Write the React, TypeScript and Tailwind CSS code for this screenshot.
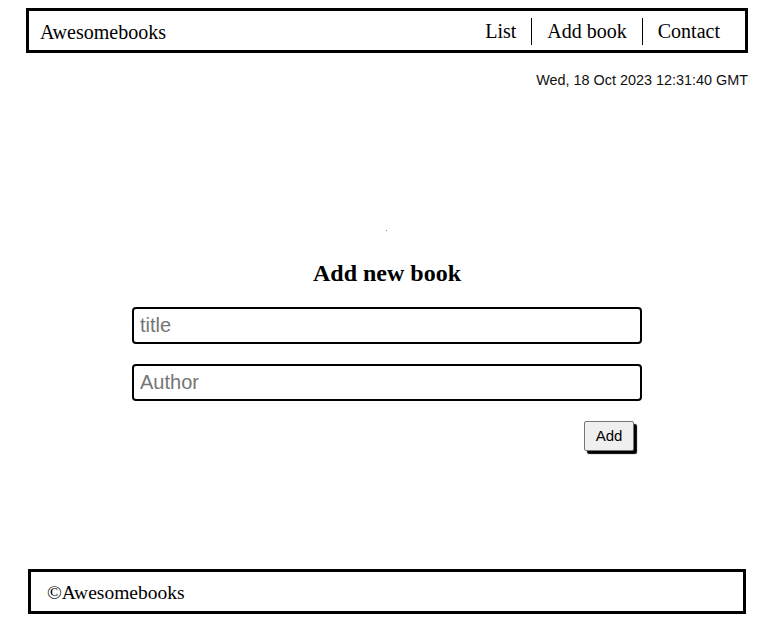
import React from "react";

export default function App() {
  const serif = { fontFamily: '"Liberation Serif", "Times New Roman", serif' };
  return (
    <div className="w-[770px] h-[625px] bg-white text-black flex flex-col" style={serif}>
      <header className="ml-[26px] mt-[8px] w-[722px] h-[45px] border-[3px] border-black flex items-center justify-between pl-[11px] pr-[10px] pt-[2px] text-[20px]">
        <span className="leading-none">Awesomebooks</span>
        <nav className="flex items-center">
          <span className="px-[15px] leading-[27px]">List</span>
          <span className="px-[15px] leading-[27px] border-l border-black">Add book</span>
          <span className="px-[15px] leading-[27px] border-l border-black">Contact</span>
        </nav>
      </header>
      <div
        className="mt-[17px] h-[20px] w-[748px] text-right text-[14.4px] leading-[20px] text-[#111]"
        style={{ fontFamily: '"Liberation Sans", Arial, sans-serif' }}
      >
        Wed, 18 Oct 2023 12:31:40 GMT
      </div>
      <div className="mt-[140px] h-[1px] w-[770px] flex">
        <div className="ml-[386px] w-[1px] h-[1px] bg-[#888]" />
      </div>
      <h2 className="mt-[28px] ml-[132px] w-[510px] text-center text-[24px] font-bold leading-[28px]">
        Add new book
      </h2>
      <form className="ml-[132px] w-[510px] flex flex-col" style={{ fontFamily: '"Liberation Sans", Arial, sans-serif' }}>
        <input
          placeholder="title"
          className="mt-[20px] h-[37px] w-[510px] border-2 border-black rounded-[4px] px-[6px] text-[20px] placeholder:text-[#757575] outline-none"
        />
        <input
          placeholder="Author"
          className="mt-[20px] h-[37px] w-[510px] border-2 border-black rounded-[4px] px-[6px] text-[20px] placeholder:text-[#757575] outline-none"
        />
        <div className="mt-[20px] flex justify-end pr-[8px]">
          <button
            type="button"
            className="w-[50px] h-[30px] bg-[#efefef] border border-[#767676] rounded-[2px] text-[15px] pt-[1px] shadow-[3px_3px_1px_#000] flex items-center justify-center"
          >
            Add
          </button>
        </div>
      </form>
      <footer className="ml-[28px] mt-[118px] w-[718px] h-[45px] border-[3px] border-black flex items-center pl-[16px] pt-[2px] text-[19.5px]">
        ©Awesomebooks
      </footer>
    </div>
  );
}
